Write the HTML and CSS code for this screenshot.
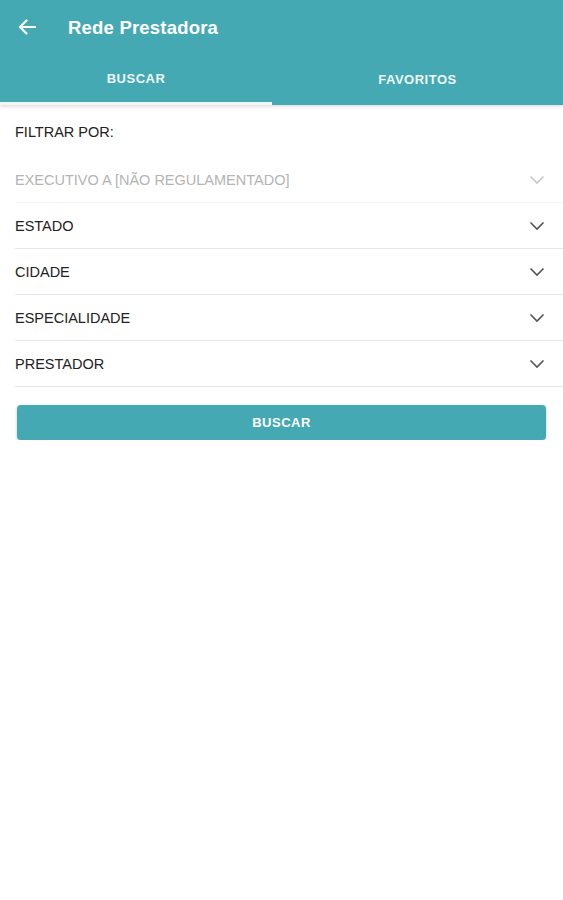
FILE: index.html
```html
<!DOCTYPE html>
<html lang="pt">
<head>
    <meta charset="UTF-8">
    <meta name="viewport" content="width=device-width, initial-scale=1.0">
    <title>Rede Prestadora</title>
    <link rel="stylesheet" href="styles.css">
</head>
<body>
    <div class="header">
        <div class="toolbar">
            <svg class="back" width="18" height="16" viewBox="0 0 18 16">
                <path d="M17 8H2M8.5 1.5L2 8l6.5 6.5" fill="none" stroke="#fff" stroke-width="2.2" stroke-linecap="round" stroke-linejoin="round"/>
            </svg>
            <h1>Rede Prestadora</h1>
        </div>
        <div class="tabs">
            <div class="tab active">BUSCAR</div>
            <div class="tab">FAVORITOS</div>
        </div>
    </div>

    <div class="content">
        <p class="label">FILTRAR POR:</p>
        <div class="select disabled">
            <span>EXECUTIVO A [NÃO REGULAMENTADO]</span>
            <svg class="chev" width="16" height="10" viewBox="0 0 16 10"><path d="M1.5 1.5L8 8l6.5-6.5" fill="none" stroke="currentColor" stroke-width="1.6"/></svg>
        </div>
        <div class="select">
            <span>ESTADO</span>
            <svg class="chev" width="16" height="10" viewBox="0 0 16 10"><path d="M1.5 1.5L8 8l6.5-6.5" fill="none" stroke="currentColor" stroke-width="1.6"/></svg>
        </div>
        <div class="select">
            <span>CIDADE</span>
            <svg class="chev" width="16" height="10" viewBox="0 0 16 10"><path d="M1.5 1.5L8 8l6.5-6.5" fill="none" stroke="currentColor" stroke-width="1.6"/></svg>
        </div>
        <div class="select">
            <span>ESPECIALIDADE</span>
            <svg class="chev" width="16" height="10" viewBox="0 0 16 10"><path d="M1.5 1.5L8 8l6.5-6.5" fill="none" stroke="currentColor" stroke-width="1.6"/></svg>
        </div>
        <div class="select">
            <span>PRESTADOR</span>
            <svg class="chev" width="16" height="10" viewBox="0 0 16 10"><path d="M1.5 1.5L8 8l6.5-6.5" fill="none" stroke="currentColor" stroke-width="1.6"/></svg>
        </div>
        <button class="btn">BUSCAR</button>
    </div>
</body>
</html>
```

FILE: styles.css
```css
body {
    margin: 0;
    background-color: #fff;
    font-family: "Liberation Sans", Arial, sans-serif;
    color: #222;
}

.header {
    background-color: #45a9b4;
    color: #fff;
    box-shadow: 0 2px 3px rgba(0, 0, 0, 0.12);
}

.toolbar {
    height: 55px;
    display: flex;
    align-items: center;
    padding-left: 18px;
}

.back {
    margin-top: -1px;
}

.toolbar h1 {
    margin: 0 0 0 32px;
    font-size: 18.5px;
    font-weight: bold;
    letter-spacing: 0.2px;
}

.tabs {
    display: flex;
    height: 50px;
}

.tab {
    width: 50%;
    display: flex;
    align-items: center;
    justify-content: center;
    font-size: 13px;
    font-weight: bold;
    letter-spacing: 0.5px;
    padding-bottom: 2px;
    box-sizing: border-box;
    color: #eef8f9;
}

.tab.active {
    width: 272px;
    border-bottom: 3px solid #f2f4f5;
    padding-bottom: 0;
}

.tab:last-child {
    flex: 1;
}

.content {
    padding: 17px 0 0 15px;
}

.label {
    margin: 0 0 15px;
    font-size: 14.5px;
    line-height: 20px;
}

.select {
    height: 45px;
    display: flex;
    align-items: center;
    justify-content: space-between;
    border-bottom: 1px solid #e6e6e6;
    font-size: 14.5px;
    color: #222;
    padding-right: 18px;
}

.select.disabled {
    color: #b4b4b4;
    border-bottom-color: #f2f2f2;
}

.chev {
    color: #555;
}

.select.disabled .chev {
    color: #c8c8c8;
}

.btn {
    display: block;
    margin: 18px 0 0 2px;
    width: 529px;
    height: 35px;
    border: none;
    border-radius: 4px;
    background-color: #45a9b4;
    color: #fff;
    font-family: "Liberation Sans", Arial, sans-serif;
    font-size: 13px;
    font-weight: bold;
    letter-spacing: 0.5px;
    box-shadow: 0 1px 3px rgba(0, 0, 0, 0.25);
}
```
